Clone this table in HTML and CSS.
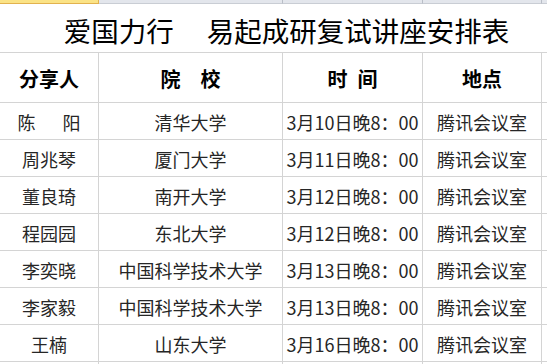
FILE: index.html
```html
<!DOCTYPE html>
<html lang="zh-CN">
<head>
<meta charset="utf-8">
<title>爱国力行 易起成研复试讲座安排表</title>
<link rel="stylesheet" href="styles.css">
</head>
<body>
<div class="sheet">
  <div class="strip sel"></div>
  <div class="strip"></div>
  <div class="strip"></div>
  <div class="strip"></div>
  <div class="strip last"></div>

  <div class="title">爱国力行&emsp;&thinsp;易起成研复试讲座安排表</div>

  <div class="cell head">分享人</div>
  <div class="cell head">院　校</div>
  <div class="cell head">时&ensp;间</div>
  <div class="cell head">地点</div>
  <div class="cell edge"></div>

  <div class="cell">陈&emsp;&ensp;阳</div>
  <div class="cell">清华大学</div>
  <div class="cell">3月10日晚8：00</div>
  <div class="cell">腾讯会议室</div>
  <div class="cell edge"></div>

  <div class="cell">周兆琴</div>
  <div class="cell">厦门大学</div>
  <div class="cell">3月11日晚8：00</div>
  <div class="cell">腾讯会议室</div>
  <div class="cell edge"></div>

  <div class="cell">董良琦</div>
  <div class="cell">南开大学</div>
  <div class="cell">3月12日晚8：00</div>
  <div class="cell">腾讯会议室</div>
  <div class="cell edge"></div>

  <div class="cell">程园园</div>
  <div class="cell">东北大学</div>
  <div class="cell">3月12日晚8：00</div>
  <div class="cell">腾讯会议室</div>
  <div class="cell edge"></div>

  <div class="cell">李奕晓</div>
  <div class="cell">中国科学技术大学</div>
  <div class="cell">3月13日晚8：00</div>
  <div class="cell">腾讯会议室</div>
  <div class="cell edge"></div>

  <div class="cell">李家毅</div>
  <div class="cell">中国科学技术大学</div>
  <div class="cell">3月13日晚8：00</div>
  <div class="cell">腾讯会议室</div>
  <div class="cell edge"></div>

  <div class="cell">王楠</div>
  <div class="cell">山东大学</div>
  <div class="cell">3月16日晚8：00</div>
  <div class="cell">腾讯会议室</div>
  <div class="cell edge"></div>

  <div class="cell stub"></div>
  <div class="cell stub"></div>
  <div class="cell stub"></div>
  <div class="cell stub"></div>
  <div class="cell stub edge"></div>
</div>
</body>
</html>
```

FILE: styles.css
```css
html, body {
  margin: 0;
  padding: 0;
  background: #ffffff;
  overflow: hidden;
}

body {
  width: 547px;
  height: 364px;
  font-family: "Noto Sans CJK SC", "Noto Sans", sans-serif;
  color: #262626;
}

.sheet {
  display: grid;
  grid-template-columns: 99px 184px 140px 119px 5px;
  grid-template-rows: 4px 49px 50px repeat(7, 37px) 2px;
}

.strip {
  box-sizing: border-box;
  background: #e3e6ec;
  border-right: 1px solid #b9bec7;
  border-bottom: 1px solid #c9cdd4;
}

.strip.sel {
  background: #fbe386;
  border-right: 1px solid #e2b24e;
  border-bottom: 1px solid #e2b24e;
}

.strip.last {
  border-right: none;
}

.title {
  grid-column: 1 / -1;
  box-sizing: border-box;
  border-bottom: 1px solid #d4d4d4;
  display: flex;
  align-items: center;
  justify-content: center;
  padding: 4px 0 0 26px;
  font-size: 27.5px;
  color: #000;
  white-space: nowrap;
}

.cell {
  box-sizing: border-box;
  border-right: 1px solid #d4d4d4;
  border-bottom: 1px solid #d4d4d4;
  display: flex;
  align-items: center;
  justify-content: center;
  font-size: 18px;
  white-space: nowrap;
  padding-top: 1px;
}

.cell.head {
  font-size: 20px;
  font-weight: bold;
  color: #000;
}

.cell.edge {
  border-right: none;
}

.cell.stub {
  border-bottom: none;
  padding-top: 0;
}
```
